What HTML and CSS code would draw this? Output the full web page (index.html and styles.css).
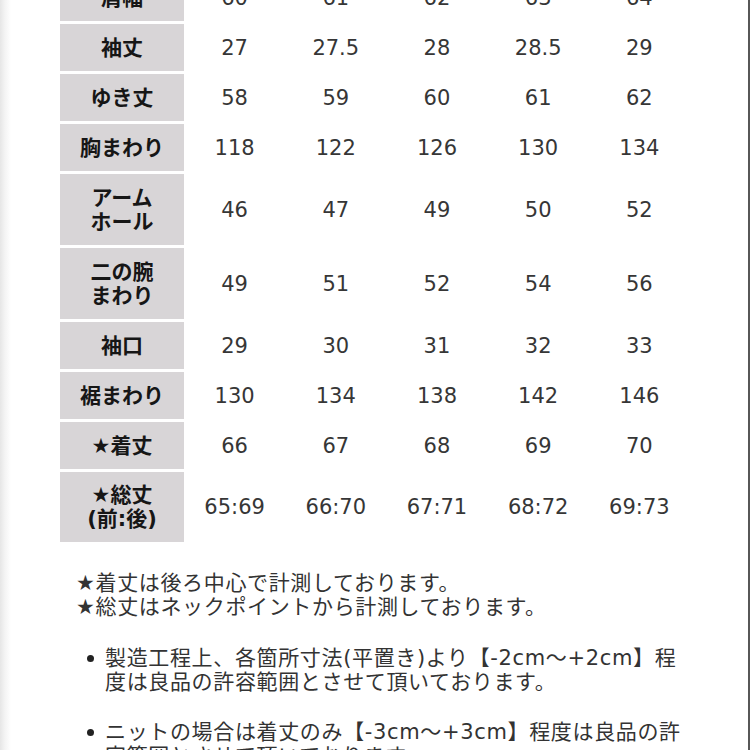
FILE: index.html
```html
<!DOCTYPE html>
<html lang="ja">
<head>
<meta charset="utf-8">
<title>サイズ表</title>
<link rel="stylesheet" href="styles.css">
</head>
<body>
<div class="page">
  <div class="size-table">
    <div class="row"><div class="head">肩幅</div><div class="val">60</div><div class="val">61</div><div class="val">62</div><div class="val">63</div><div class="val">64</div></div>
    <div class="row"><div class="head">袖丈</div><div class="val">27</div><div class="val">27.5</div><div class="val">28</div><div class="val">28.5</div><div class="val">29</div></div>
    <div class="row"><div class="head">ゆき丈</div><div class="val">58</div><div class="val">59</div><div class="val">60</div><div class="val">61</div><div class="val">62</div></div>
    <div class="row"><div class="head">胸まわり</div><div class="val">118</div><div class="val">122</div><div class="val">126</div><div class="val">130</div><div class="val">134</div></div>
    <div class="row tall"><div class="head">アーム<br>ホール</div><div class="val">46</div><div class="val">47</div><div class="val">49</div><div class="val">50</div><div class="val">52</div></div>
    <div class="row tall"><div class="head">二の腕<br>まわり</div><div class="val">49</div><div class="val">51</div><div class="val">52</div><div class="val">54</div><div class="val">56</div></div>
    <div class="row"><div class="head">袖口</div><div class="val">29</div><div class="val">30</div><div class="val">31</div><div class="val">32</div><div class="val">33</div></div>
    <div class="row"><div class="head">裾まわり</div><div class="val">130</div><div class="val">134</div><div class="val">138</div><div class="val">142</div><div class="val">146</div></div>
    <div class="row"><div class="head">★着丈</div><div class="val">66</div><div class="val">67</div><div class="val">68</div><div class="val">69</div><div class="val">70</div></div>
    <div class="row total"><div class="head">★総丈<br>(前:後)</div><div class="val">65:69</div><div class="val">66:70</div><div class="val">67:71</div><div class="val">68:72</div><div class="val">69:73</div></div>
  </div>
  <div class="notes">
    <p class="star-note">★着丈は後ろ中心で計測しております。<br>★総丈はネックポイントから計測しております。</p>
    <ul class="bullets">
      <li><span class="dot"></span><span class="bullet-text">製造工程上、各箇所寸法(平置き)より【-2cm～+2cm】程<br>度は良品の許容範囲とさせて頂いております。</span></li>
      <li><span class="dot"></span><span class="bullet-text">ニットの場合は着丈のみ【-3cm～+3cm】程度は良品の許<br>容範囲とさせて頂いております。</span></li>
    </ul>
  </div>
</div>
</body>
</html>
```

FILE: styles.css
```css
html, body {
  margin: 0;
  padding: 0;
}

body {
  width: 750px;
  height: 750px;
  overflow: hidden;
  background: #ffffff;
  font-family: "DejaVu Sans", "Noto Sans CJK JP", sans-serif;
}

.page {
  width: 748px;
  height: 750px;
  border-right: 2px solid #575757;
  background: linear-gradient(to right, #e6e6e6 0, #f4f4f4 5px, #ffffff 11px);
  overflow: hidden;
}

.size-table {
  margin-top: -26px;
  margin-left: 60px;
  display: flex;
  flex-direction: column;
  gap: 3px;
}

.row {
  display: grid;
  grid-template-columns: 124px repeat(5, 101.2px);
  height: 47px;
}

.row.tall {
  height: 71px;
}

.row.total {
  height: 70px;
}

.head {
  background: #d8d5d7;
  display: flex;
  align-items: center;
  justify-content: center;
  text-align: center;
  font-weight: bold;
  font-size: 21px;
  line-height: 24px;
  color: #161616;
}

.val {
  display: flex;
  align-items: center;
  justify-content: center;
  font-size: 21px;
  color: #363636;
}

.notes {
  margin: 29px 0 0 76px;
  font-size: 21px;
  line-height: 24px;
  letter-spacing: 0.65px;
  color: #333333;
}

.star-note {
  margin: 0;
}

.bullets {
  list-style: none;
  margin: 27px 0 0 0;
  padding: 0;
}

.bullets li {
  display: grid;
  grid-template-columns: 29px 1fr;
  margin-bottom: 26px;
}

.dot {
  width: 7px;
  height: 7px;
  border-radius: 50%;
  background: #222222;
  margin: 9px 0 0 11px;
}

.bullet-text {
  white-space: nowrap;
}
```
